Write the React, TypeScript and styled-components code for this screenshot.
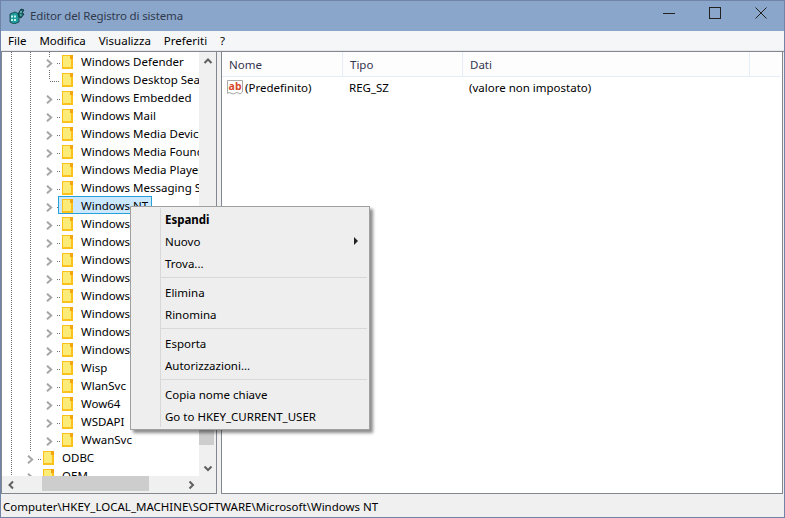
import React from "react"
import styled, { createGlobalStyle } from "styled-components"

const Global = createGlobalStyle`
  html, body {
    margin: 0;
    padding: 0;
    background: #8ba6cb;
    overflow: hidden;
  }
  * {
    box-sizing: border-box;
  }
`

const Win = styled.div`
  position: relative;
  width: 785px;
  height: 518px;
  display: flex;
  flex-direction: column;
  background: #f0f0f0;
  font-family: "Noto Sans", "Open Sans", sans-serif;
  font-size: 11.5px;
  color: #000;
  overflow: hidden;
  border: 1px solid #6f84a6;
`

const TitleBar = styled.div`
  height: 30px;
  flex: none;
  display: flex;
  align-items: center;
  background: #8ba6cb;
  padding-left: 8px;
`

const TitleText = styled.div`
  margin-left: 5px;
  padding-bottom: 2px;
  font-size: 11.5px;
  letter-spacing: -0.15px;
  color: #2f3a4d;
`

const WinButtons = styled.div`
  margin-left: auto;
  display: flex;
  height: 100%;
`

const WinButton = styled.div`
  width: 45px;
  height: 100%;
  display: flex;
  align-items: center;
  justify-content: center;
  padding-bottom: 6px;
  margin-right: 1px;
`

const MenuBar = styled.div`
  height: 20px;
  flex: none;
  display: flex;
  align-items: center;
  padding-left: 7px;
  gap: 13px;
  background: #f5f6f7;
  border-bottom: 1px solid #e6e7e8;
`

const Panes = styled.div`
  flex: 1;
  display: flex;
  min-height: 0;
  gap: 4px;
  border-top: 1px solid #828790;
`

const TreePane = styled.div`
  width: 216px;
  flex: none;
  display: grid;
  grid-template-columns: 197px 17px;
  grid-template-rows: 424px 17px;
  background: #fff;
  border-left: 1px solid #828790;
  border-right: 1px solid #828790;
  border-bottom: 1px solid #828790;
`

const TreeBody = styled.div`
  overflow: hidden;
  background: #fff;
`

const dots = "repeating-linear-gradient(to bottom, #707070 0 1px, transparent 1px 2px)"

// $guide: height of the dotted line at the parent level, $stem: same for the line of this level
const Row = styled.div<{ $level: number; $guide: string; $stem: string }>`
  height: 18px;
  display: flex;
  align-items: center;
  white-space: nowrap;
  padding-left: ${p => (p.$level === 2 ? 44 : 25)}px;
  background-image: ${dots}, ${dots}, ${dots};
  background-repeat: no-repeat;
  background-size: 1px 100%, 1px ${p => p.$guide}, 1px ${p => p.$stem};
  background-position: 9px 0, 28px 0, 47px 0;
`

const Chevron = styled.svg`
  flex: none;
  width: 7px;
  height: 9px;
  margin-top: 4px;
`

const EmptySlot = styled.span`
  flex: none;
  width: 7px;
`

const Stub = styled.span<{ $long?: boolean }>`
  flex: none;
  width: ${p => (p.$long ? 10 : 3)}px;
  height: 1px;
  margin-top: 4px;
  margin-left: ${p => (p.$long ? -3 : 4)}px;
  margin-right: 2px;
  background: repeating-linear-gradient(to right, #707070 0 1px, transparent 1px 2px);
`

const Folder = styled.span`
  flex: none;
  position: relative;
  width: 11px;
  height: 14px;
  margin-top: 2px;
  margin-right: 7px;
  background: #fdeb77;
  border: 1px solid #fcc21b;
  border-bottom-width: 2px;
  border-right-width: 2px;

  &::after {
    content: "";
    position: absolute;
    right: -2px;
    top: -1px;
    width: 3px;
    height: 4px;
    background: #f2a60c;
  }
`

const Label = styled.span`
  padding: 0 1px;
`

const SelectedBox = styled.span`
  display: flex;
  align-items: center;
  flex: none;
  height: 18px;
  margin-left: -4px;
  padding: 0 2px 0 3px;
  background: #cce8ff;
  border: 1px solid #26a0da;
`

const VScroll = styled.div`
  background: #f0f0f0;
  display: flex;
  flex-direction: column;
  align-items: center;
`

const ScrollButton = styled.div<{ $end?: boolean }>`
  flex: none;
  width: 17px;
  height: 17px;
  display: flex;
  align-items: center;
  justify-content: center;
  margin-left: ${p => (p.$end ? "auto" : "0")};
`

const VTrack = styled.div`
  flex: 1;
  width: 100%;
  display: flex;
  flex-direction: column;
`

const VThumb = styled.div`
  margin-top: 158px;
  height: 218px;
  width: 15px;
  background: #cdcdcd;
`

const HScroll = styled.div`
  display: flex;
  background: #f0f0f0;
`

const HThumb = styled.div`
  margin-left: 23px;
  width: 107px;
  height: 15px;
  background: #cdcdcd;
`

const Corner = styled.div`
  background: #f0f0f0;
`

const ListPane = styled.div`
  flex: 1;
  background: #fff;
  border: 1px solid #828790;
  border-top: none;
  margin-right: 1px;
`

const Header = styled.div`
  height: 25px;
  display: grid;
  grid-template-columns: 121px 120px 287px 1fr;
  background: #fdfdfd;
  border-bottom: 1px solid #e5edf8;
  margin-right: 2px;
`

const HeaderCell = styled.div<{ $last?: boolean }>`
  padding-left: 7px;
  display: flex;
  align-items: center;
  color: #34344f;
  border-right: ${p => (p.$last ? "none" : "1px solid #e5edf8")};
`

const DataRow = styled.div`
  height: 20px;
  display: grid;
  grid-template-columns: 120px 120px 1fr;
  align-items: center;
`

const NameCell = styled.div`
  display: flex;
  align-items: center;
  padding-left: 5px;
  gap: 2px;
`

const Cell = styled.div`
  padding-left: 7px;
`

const StatusBar = styled.div`
  height: 23px;
  flex: none;
  display: flex;
  align-items: center;
  padding: 2px 0 0 2px;
  background: #f0f0f0;
`

const ContextMenu = styled.div`
  position: absolute;
  left: 129px;
  top: 205px;
  width: 240px;
  height: 224px;
  padding: 1px 2px 2px;
  background: #eeeeee;
  border: 1px solid #a0a0a0;
  box-shadow: 3px 3px 3px rgba(0, 0, 0, 0.45);
`

const MenuColumn = styled.div`
  height: 100%;
  background: linear-gradient(#d8d8d8, #d8d8d8) no-repeat 27px 0 / 1px 100%;
`

const MenuItem = styled.div<{ $bold?: boolean }>`
  position: relative;
  height: 22px;
  display: flex;
  align-items: center;
  padding-left: 32px;
  font-weight: ${p => (p.$bold ? 700 : 400)};
`

const Arrow = styled.span`
  position: absolute;
  right: 9px;
  top: 7px;
  width: 0;
  height: 0;
  border-left: 4px solid #222;
  border-top: 4px solid transparent;
  border-bottom: 4px solid transparent;
`

const MenuSep = styled.div`
  height: 1px;
  margin: 3px 0 3px 27px;
  background: #d8d8d8;
`

const nodes: { name: string; expander?: boolean }[] = [
  { name: "Windows Defender", expander: true },
  { name: "Windows Desktop Search" },
  { name: "Windows Embedded", expander: true },
  { name: "Windows Mail", expander: true },
  { name: "Windows Media Device Manager", expander: true },
  { name: "Windows Media Foundation", expander: true },
  { name: "Windows Media Player NSS", expander: true },
  { name: "Windows Messaging Subsystem", expander: true },
  { name: "Windows NT", expander: true },
  { name: "Windows Performance Toolkit", expander: true },
  { name: "Windows Photo Viewer", expander: true },
  { name: "Windows Portable Devices", expander: true },
  { name: "Windows Script Host", expander: true },
  { name: "Windows Search", expander: true },
  { name: "Windows Security", expander: true },
  { name: "Windows Store", expander: true },
  { name: "Windows Tablet", expander: true },
  { name: "Wisp", expander: true },
  { name: "WlanSvc", expander: true },
  { name: "Wow64", expander: true },
  { name: "WSDAPI", expander: true },
  { name: "WwanSvc", expander: true },
]

const stems: Record<number, string> = { 0: "5px", 1: "9px" }

const Expander = () => (
  <Chevron viewBox="0 0 7 9">
    <path d="M1 0.7 L5.2 4.5 L1 8.3" fill="none" stroke="#a6a6a6" strokeWidth="2" />
  </Chevron>
)

const Arrowhead = ({ dir }: { dir: "up" | "down" | "left" | "right" }) => {
  const d = {
    up: "M1.5 7 L5 3.5 L8.5 7",
    down: "M1.5 3.5 L5 7 L8.5 3.5",
    left: "M7 1.5 L3.5 5 L7 8.5",
    right: "M3.5 1.5 L7 5 L3.5 8.5",
  }[dir]
  return (
    <svg width="10" height="10" viewBox="0 0 10 10">
      <path d={d} fill="none" stroke="#606060" strokeWidth="2" />
    </svg>
  )
}

const RegIcon = () => (
  <svg width="16" height="16" viewBox="0 0 16 16">
    <path d="M0.5 1.5 H15.5 V13 L13 15 L10 13.5 L6 15 L2 13.5 L0.5 14.5 Z" fill="#fff" stroke="#a8a8a8" />
    <text x="1.6" y="10.5" fontFamily="Noto Sans, sans-serif" fontSize="10.5" fontWeight="700" fill="#d8482a">
      ab
    </text>
  </svg>
)

const AppIcon = () => (
  <svg width="16" height="16" viewBox="0 0 16 16">
    <path d="M1 6 L6 4 L10 6 V14 L5 16 L1 14 Z" fill="#1f9c9c" stroke="#0a3d3f" strokeWidth="0.8" />
    <path d="M2 7.5 H4 V9.5 H2 Z M5 7.5 H7 V9.5 H5 Z M2 11 H4 V13 H2 Z M5 11 H7 V13 H5 Z" fill="#c8f2ee" />
    <path d="M9 6 L12 1 L15 2 L13 5 L15 6 L12 10 L10 9 Z" fill="#14686b" stroke="#0a2f33" strokeWidth="0.8" />
    <path d="M11 4 H13 M11 7 H12.5" stroke="#a8e6e0" strokeWidth="1" />
  </svg>
)

const App = () => (
  <>
    <Global />
    <Win>
      <TitleBar>
        <AppIcon />
        <TitleText>Editor del Registro di sistema</TitleText>
        <WinButtons>
          <WinButton>
            <svg width="12" height="12" viewBox="0 0 12 12">
              <path d="M0 6.5 H12" stroke="#222" strokeWidth="1" />
            </svg>
          </WinButton>
          <WinButton>
            <svg width="12" height="12" viewBox="0 0 12 12">
              <rect x="0.5" y="0.5" width="11" height="11" fill="none" stroke="#222" />
            </svg>
          </WinButton>
          <WinButton>
            <svg width="12" height="12" viewBox="0 0 12 12">
              <path d="M0.5 0.5 L11.5 11.5 M11.5 0.5 L0.5 11.5" stroke="#222" strokeWidth="1" />
            </svg>
          </WinButton>
        </WinButtons>
      </TitleBar>
      <MenuBar>
        <span>File</span>
        <span>Modifica</span>
        <span>Visualizza</span>
        <span>Preferiti</span>
        <span>?</span>
      </MenuBar>
      <Panes>
        <TreePane>
          <TreeBody>
            {nodes.map((node, i) => (
              <Row key={node.name} $level={2} $guide="100%" $stem={stems[i] || "0"}>
                {node.expander ? <Expander /> : <EmptySlot />}
                <Stub $long={!node.expander} />
                {node.name === "Windows NT" ? (
                  <SelectedBox>
                    <Folder />
                    <Label>{node.name}</Label>
                  </SelectedBox>
                ) : (
                  <>
                    <Folder />
                    <Label>{node.name}</Label>
                  </>
                )}
              </Row>
            ))}
            <Row $level={1} $guide="4px" $stem="0">
              <Expander />
              <Stub />
              <Folder />
              <Label>ODBC</Label>
            </Row>
            <Row $level={1} $guide="0" $stem="0">
              <Expander />
              <Stub />
              <Folder />
              <Label>OEM</Label>
            </Row>
          </TreeBody>
          <VScroll>
            <ScrollButton>
              <Arrowhead dir="up" />
            </ScrollButton>
            <VTrack>
              <VThumb />
            </VTrack>
            <ScrollButton>
              <Arrowhead dir="down" />
            </ScrollButton>
          </VScroll>
          <HScroll>
            <ScrollButton>
              <Arrowhead dir="left" />
            </ScrollButton>
            <HThumb />
            <ScrollButton $end>
              <Arrowhead dir="right" />
            </ScrollButton>
          </HScroll>
          <Corner />
        </TreePane>
        <ListPane>
          <Header>
            <HeaderCell>Nome</HeaderCell>
            <HeaderCell>Tipo</HeaderCell>
            <HeaderCell>Dati</HeaderCell>
            <HeaderCell $last />
          </Header>
          <DataRow>
            <NameCell>
              <RegIcon />
              (Predefinito)
            </NameCell>
            <Cell>REG_SZ</Cell>
            <Cell>(valore non impostato)</Cell>
          </DataRow>
        </ListPane>
      </Panes>
      <StatusBar>Computer\HKEY_LOCAL_MACHINE\SOFTWARE\Microsoft\Windows NT</StatusBar>
      <ContextMenu>
        <MenuColumn>
          <MenuItem $bold>Espandi</MenuItem>
          <MenuItem>
            Nuovo
            <Arrow />
          </MenuItem>
          <MenuItem>Trova...</MenuItem>
          <MenuSep />
          <MenuItem>Elimina</MenuItem>
          <MenuItem>Rinomina</MenuItem>
          <MenuSep />
          <MenuItem>Esporta</MenuItem>
          <MenuItem>Autorizzazioni...</MenuItem>
          <MenuSep />
          <MenuItem>Copia nome chiave</MenuItem>
          <MenuItem>Go to HKEY_CURRENT_USER</MenuItem>
        </MenuColumn>
      </ContextMenu>
    </Win>
  </>
)

export default App
